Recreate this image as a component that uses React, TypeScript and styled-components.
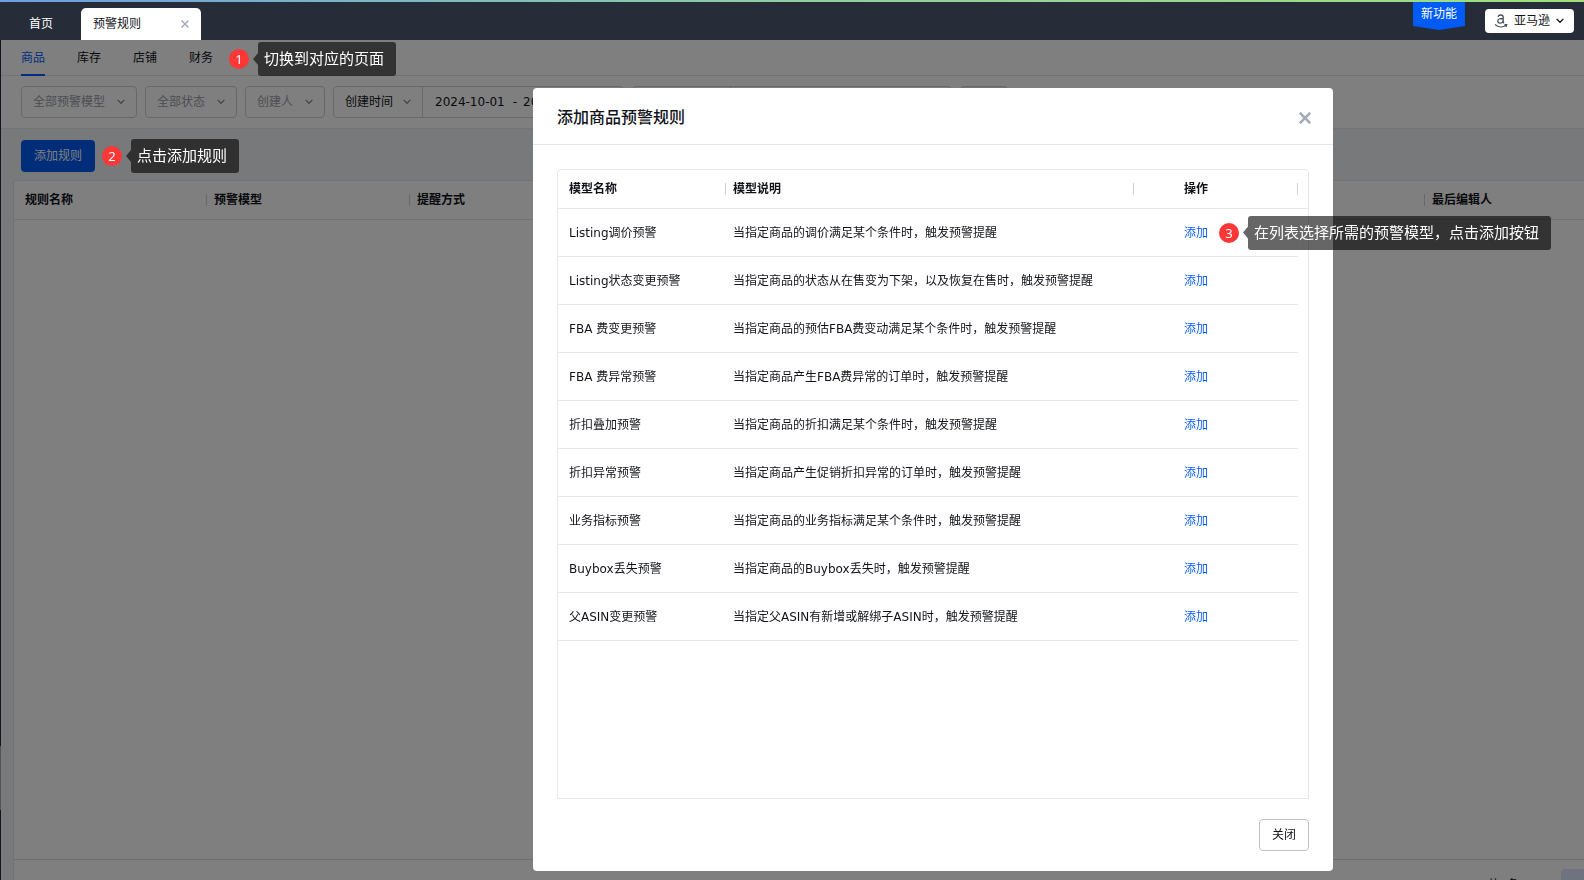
import React from "react";
import styled, { createGlobalStyle } from "styled-components";

const GlobalStyle = createGlobalStyle`
  *, *::before, *::after { box-sizing: border-box; }
  body {
    margin: 0;
    background: #fff;
    color: #111319;
    font: 12px/20px "DejaVu Sans", "Noto Sans CJK SC", sans-serif;
  }
  button, select, input { font: inherit; color: inherit; }
  button { cursor: pointer; }
  a { color: inherit; text-decoration: none; }
`;

const Page = styled.div`
  display: flex;
  flex-direction: column;
  height: 100vh;
  overflow: hidden;
`;

const ProgressStripe = styled.div`
  flex: none;
  height: 2px;
  background: linear-gradient(90deg, #6c9fe4, #8fcf9f 50%, #9fe07c);
`;

const TopBar = styled.header`
  flex: none;
  display: flex;
  align-items: flex-start;
  height: 38px;
  padding: 0 10px 0 29px;
  background: #262c38;
`;

const HomeLink = styled.a`
  padding: 12px 28px 0 0;
  line-height: 20px;
  color: #fff;
`;

const OpenTab = styled.div`
  display: flex;
  align-items: center;
  justify-content: space-between;
  width: 120px;
  height: 32px;
  margin-top: 6px;
  padding: 0 12px;
  border-radius: 5px 5px 0 0;
  background: #fff;
`;

const IconButton = styled.button`
  display: grid;
  place-items: center;
  padding: 0;
  border: 0;
  background: none;
  color: #a3abb8;
`;

const NewFeature = styled.a`
  width: 52px;
  height: 28px;
  margin: 0 20px 0 auto;
  padding-top: 2px;
  background: #005bf5;
  clip-path: polygon(0 0, 100% 0, 100% 24px, 50% 100%, 0 24px);
  text-align: center;
  color: #fff;
`;

const PlatformButton = styled.button`
  display: flex;
  align-items: center;
  height: 24px;
  margin-top: 7px;
  padding: 0 10px 0 9px;
  border: 0;
  border-radius: 4px;
  background: #fff;
  gap: 6px;
`;

const Body = styled.div`
  flex: 1;
  min-height: 0;
  display: flex;
`;

const SideEdge = styled.aside`
  flex: none;
  display: flex;
  flex-direction: column;
  justify-content: flex-end;
  width: 1px;
  padding-bottom: 70px;
  background: #262c38;
`;

const SideHandle = styled.div`
  height: 64px;
  background: #a8a8ac;
`;

const Main = styled.main`
  flex: 1;
  min-width: 0;
  display: flex;
  flex-direction: column;
  background: #f0f3f7;
`;

const SubNav = styled.nav`
  flex: none;
  display: flex;
  align-items: flex-start;
  gap: 32px;
  height: 36px;
  padding-left: 20px;
  border-bottom: 1px solid #e4e6ea;
  background: #fff;
`;

const SubNavLink = styled.a<{ $active?: boolean }>`
  height: 36px;
  margin-bottom: -1px;
  padding-top: 8px;
  line-height: 20px;
  border-bottom: 2px solid ${(p) => (p.$active ? "#0a5bff" : "transparent")};
  color: ${(p) => (p.$active ? "#0a5bff" : "inherit")};
`;

const Filters = styled.form`
  flex: none;
  display: flex;
  gap: 8px;
  padding: 10px 20px;
  border-bottom: 1px solid #e4e6ea;
  background: #fff;
`;

const Field = styled.div<{ $width: number }>`
  position: relative;
  flex: none;
  width: ${(p) => p.$width}px;
  height: 32px;
  border: 1px solid #ced1d8;
  border-radius: 4px;
`;

const Select = styled.select<{ $muted?: boolean }>`
  appearance: none;
  width: 100%;
  height: 100%;
  padding: 0 0 0 11px;
  border: 0;
  background: none;
  color: ${(p) => (p.$muted ? "#999da6" : "#111319")};
`;

const FieldArrow = styled.span`
  position: absolute;
  top: 0;
  right: 11px;
  bottom: 0;
  display: grid;
  place-items: center;
  pointer-events: none;
  color: #858b97;
`;

const FieldGroup = styled.div`
  flex: none;
  display: flex;

  & > :first-child { border-radius: 4px 0 0 4px; }
  & > :last-child { border-radius: 0 4px 4px 0; margin-left: -1px; }
`;

const DateRange = styled.div`
  display: flex;
  align-items: center;
  width: 202px;
  height: 32px;
  padding-left: 12px;
  border: 1px solid #ced1d8;
`;

const DateInput = styled.input`
  width: 72px;
  padding: 0;
  border: 0;
  background: none;
`;

const DateDash = styled.span`
  width: 16px;
  text-align: center;
`;

const TextInput = styled.input`
  width: 222px;
  height: 32px;
  padding: 0 12px;
  border: 1px solid #ced1d8;
  background: none;
`;

const ResetButton = styled.button`
  width: 48px;
  height: 32px;
  padding: 0;
  border: 1px solid #ced1d8;
  border-radius: 4px;
  background: #e8eaee;
`;

const Actions = styled.div`
  flex: none;
  display: flex;
  align-items: center;
  padding: 10px 0 7px 20px;
`;

const PrimaryButton = styled.button`
  height: 32px;
  padding: 0 13px;
  margin-right: 7px;
  border: 0;
  border-radius: 4px;
  background: #005bf5;
  color: #fff;
`;

const Card = styled.section`
  flex: 1;
  min-height: 0;
  display: flex;
  flex-direction: column;
  justify-content: space-between;
  margin-left: 12px;
  border: 1px solid #e4e6ea;
  border-width: 1px 0 0 1px;
  border-radius: 4px 0 0 0;
  background: #fff;
`;

const Table = styled.table`
  width: 100%;
  table-layout: fixed;
  border-collapse: separate;
  border-spacing: 0;
`;

const HeadCell = styled.th<{ $width?: number; $divider?: boolean; $indent?: number }>`
  width: ${(p) => (p.$width ? `${p.$width}px` : "auto")};
  height: 39px;
  padding: 0 0 0 ${(p) => p.$indent ?? 7}px;
  border-bottom: 1px solid #e4e6ea;
  background: ${(p) =>
    p.$divider ? "linear-gradient(#d0d3da, #d0d3da) right center / 1px 12px no-repeat" : "none"};
  text-align: left;
  font-weight: 700;
`;

const Cell = styled.td<{ $indent?: number }>`
  height: 48px;
  padding: 0 0 0 ${(p) => p.$indent ?? 7}px;
  border-bottom: 1px solid #e4e6ea;
`;

const Pagination = styled.footer`
  flex: none;
  display: flex;
  align-items: flex-start;
  justify-content: flex-end;
  gap: 42px;
  height: 21px;
  padding-top: 9px;
  border-top: 1px solid #d8dade;
  overflow: hidden;
  line-height: 32px;
`;

const PageNumber = styled.button`
  width: 23px;
  height: 32px;
  padding: 0;
  border: 0;
  border-radius: 4px 0 0 4px;
  background: #dfe6fb;
`;

const Mask = styled.div`
  position: fixed;
  inset: 40px 0 0;
  z-index: 10;
  display: flex;
  justify-content: center;
  padding: 48px 0 9px 282px;
  background: rgba(0, 0, 0, 0.5);
`;

const Dialog = styled.section`
  display: flex;
  flex-direction: column;
  width: 800px;
  border-radius: 4px;
  background: #fff;
`;

const DialogHead = styled.header`
  display: flex;
  align-items: center;
  justify-content: space-between;
  height: 57px;
  padding: 3px 22px 0 24px;
  border-bottom: 1px solid #e4e6ea;
`;

const DialogTitle = styled.h2`
  margin: 0;
  font-size: 16px;
  line-height: 24px;
  font-weight: 500;
`;

const TableBox = styled.div`
  flex: 1;
  margin: 24px 24px 0;
  border: 1px solid #e4e6ea;
  border-radius: 4px 4px 0 0;
`;

const DialogFoot = styled.footer`
  display: flex;
  justify-content: flex-end;
  padding: 20px 24px;
`;

const PlainButton = styled.button`
  height: 32px;
  padding: 0 12px;
  border: 1px solid #bfc2ca;
  border-radius: 4px;
  background: #fff;
`;

const AddAction = styled.div`
  position: relative;
  width: 24px;
`;

const AddLink = styled.a`
  color: #0a5bff;
`;

const CalloutRow = styled.div`
  position: relative;
  z-index: 20;
  display: flex;
  align-items: center;
  flex: none;
`;

const NavCallout = styled(CalloutRow)`
  margin: 2px 0 0 -16px;
`;

const CellCallout = styled(CalloutRow)`
  position: absolute;
  top: 50%;
  left: 35px;
  transform: translateY(-50%);
`;

const Badge = styled.span`
  width: 20px;
  height: 20px;
  margin-right: 4px;
  border-radius: 50%;
  background: #fd3636;
  color: #fff;
  text-align: center;
  font-family: "Noto Sans", sans-serif;
  font-size: 13px;
`;

const BubbleArrow = styled.span`
  width: 5px;
  height: 12px;
  background: rgba(0, 0, 0, 0.6);
  clip-path: polygon(100% 0, 100% 100%, 0 50%);
`;

const Bubble = styled.span`
  height: 34px;
  padding: 0 12px 0 6px;
  border-radius: 3px;
  background: rgba(0, 0, 0, 0.6);
  color: #fff;
  font-size: 15px;
  line-height: 34px;
  white-space: nowrap;
`;

const Chevron = () => (
  <svg width="8" height="6" viewBox="0 0 8 6" fill="none" stroke="currentColor" strokeWidth="1.3">
    <path d="M0.6 0.9 4 4.3 7.4 0.9" />
  </svg>
);

const Cross = ({ size, weight }: { size: number; weight: number }) => (
  <svg width={size} height={size} viewBox="0 0 12 12" fill="none" stroke="currentColor" strokeWidth={weight}>
    <path d="M0.8 0.8 11.2 11.2M11.2 0.8 0.8 11.2" />
  </svg>
);

const AmazonMark = () => (
  <svg width="14" height="14" viewBox="0 0 14 14" fill="none" stroke="#4b5160" strokeWidth="1.3">
    <path d="M4 2.9C4.3 1.6 5.3 1 6.7 1 8.4 1 9.2 1.8 9.2 3.3V7.3C9.2 8.3 9.5 8.8 10 9.3M9.2 4.5C6 4.5 3.8 5 3.8 7.1 3.8 8.5 4.7 9.2 5.9 9.2 7.8 9.2 9.2 7.9 9.2 6" />
    <path d="M1 10.5C4.3 13.6 9 13.6 12 11.3M10.5 10.6 12.8 10.5 12.2 12.8" strokeWidth="1.1" />
  </svg>
);

const Callout = ({ step, text, as: Row = CalloutRow }: { step: number; text: string; as?: React.ElementType }) => (
  <Row>
    <Badge>{step}</Badge>
    <BubbleArrow />
    <Bubble>{text}</Bubble>
  </Row>
);

const filters = [
  { label: "全部预警模型", width: 116 },
  { label: "全部状态", width: 92 },
  { label: "创建人", width: 80 },
];

const models = [
  ["Listing调价预警", "当指定商品的调价满足某个条件时，触发预警提醒"],
  ["Listing状态变更预警", "当指定商品的状态从在售变为下架，以及恢复在售时，触发预警提醒"],
  ["FBA 费变更预警", "当指定商品的预估FBA费变动满足某个条件时，触发预警提醒"],
  ["FBA 费异常预警", "当指定商品产生FBA费异常的订单时，触发预警提醒"],
  ["折扣叠加预警", "当指定商品的折扣满足某个条件时，触发预警提醒"],
  ["折扣异常预警", "当指定商品产生促销折扣异常的订单时，触发预警提醒"],
  ["业务指标预警", "当指定商品的业务指标满足某个条件时，触发预警提醒"],
  ["Buybox丢失预警", "当指定商品的Buybox丢失时，触发预警提醒"],
  ["父ASIN变更预警", "当指定父ASIN有新增或解绑子ASIN时，触发预警提醒"],
];

export default function App() {
  return (
    <>
      <GlobalStyle />
      <Page>
        <ProgressStripe />
        <TopBar>
          <HomeLink href="#home">首页</HomeLink>
          <OpenTab>
            <span>预警规则</span>
            <IconButton type="button" aria-label="关闭标签">
              <Cross size={8} weight={2.2} />
            </IconButton>
          </OpenTab>
          <NewFeature href="#new">新功能</NewFeature>
          <PlatformButton type="button">
            <AmazonMark />
            <span>亚马逊</span>
            <Chevron />
          </PlatformButton>
        </TopBar>
        <Body>
          <SideEdge>
            <SideHandle />
          </SideEdge>
          <Main>
            <SubNav>
              <SubNavLink href="#goods" $active>商品</SubNavLink>
              <SubNavLink href="#stock">库存</SubNavLink>
              <SubNavLink href="#shop">店铺</SubNavLink>
              <SubNavLink href="#finance">财务</SubNavLink>
              <Callout step={1} text="切换到对应的页面" as={NavCallout} />
            </SubNav>
            <Filters>
              {filters.map((f) => (
                <Field key={f.label} $width={f.width}>
                  <Select $muted aria-label={f.label}>
                    <option>{f.label}</option>
                  </Select>
                  <FieldArrow><Chevron /></FieldArrow>
                </Field>
              ))}
              <FieldGroup>
                <Field $width={90}>
                  <Select aria-label="时间类型">
                    <option>创建时间</option>
                  </Select>
                  <FieldArrow><Chevron /></FieldArrow>
                </Field>
                <DateRange>
                  <DateInput aria-label="开始日期" defaultValue="2024-10-01" />
                  <DateDash>-</DateDash>
                  <DateInput aria-label="结束日期" defaultValue="2024-10-31" />
                </DateRange>
              </FieldGroup>
              <FieldGroup>
                <Field $width={99}>
                  <Select aria-label="搜索类型" />
                </Field>
                <TextInput aria-label="搜索内容" />
              </FieldGroup>
              <ResetButton type="button" aria-label="重置" />
            </Filters>
            <Actions>
              <PrimaryButton type="button">添加规则</PrimaryButton>
              <Callout step={2} text="点击添加规则" />
            </Actions>
            <Card>
              <Table>
                <thead>
                  <tr>
                    <HeadCell $width={193} $indent={11} $divider>规则名称</HeadCell>
                    <HeadCell $width={203} $divider>预警模型</HeadCell>
                    <HeadCell $width={203}>提醒方式</HeadCell>
                    <HeadCell $divider />
                    <HeadCell $width={159}>最后编辑人</HeadCell>
                  </tr>
                </thead>
              </Table>
              <Pagination>
                <span>共0条</span>
                <PageNumber type="button" aria-label="第1页" />
              </Pagination>
            </Card>
          </Main>
        </Body>
      </Page>
      <Mask>
        <Dialog role="dialog" aria-labelledby="dialog-title">
          <DialogHead>
            <DialogTitle id="dialog-title">添加商品预警规则</DialogTitle>
            <IconButton type="button" aria-label="关闭弹窗">
              <Cross size={12} weight={2.6} />
            </IconButton>
          </DialogHead>
          <TableBox>
            <Table>
              <thead>
                <tr>
                  <HeadCell $width={168} $indent={11} $divider>模型名称</HeadCell>
                  <HeadCell $divider>模型说明</HeadCell>
                  <HeadCell $width={164} $indent={50} $divider>操作</HeadCell>
                  <HeadCell $width={10} />
                </tr>
              </thead>
              <tbody>
                {models.map(([name, description], i) => (
                  <tr key={name}>
                    <Cell $indent={11}>{name}</Cell>
                    <Cell>{description}</Cell>
                    <Cell $indent={50}>
                      <AddAction>
                        <AddLink href="#add">添加</AddLink>
                        {i === 0 && (
                          <Callout step={3} text="在列表选择所需的预警模型，点击添加按钮" as={CellCallout} />
                        )}
                      </AddAction>
                    </Cell>
                  </tr>
                ))}
              </tbody>
            </Table>
          </TableBox>
          <DialogFoot>
            <PlainButton type="button">关闭</PlainButton>
          </DialogFoot>
        </Dialog>
      </Mask>
    </>
  );
}
